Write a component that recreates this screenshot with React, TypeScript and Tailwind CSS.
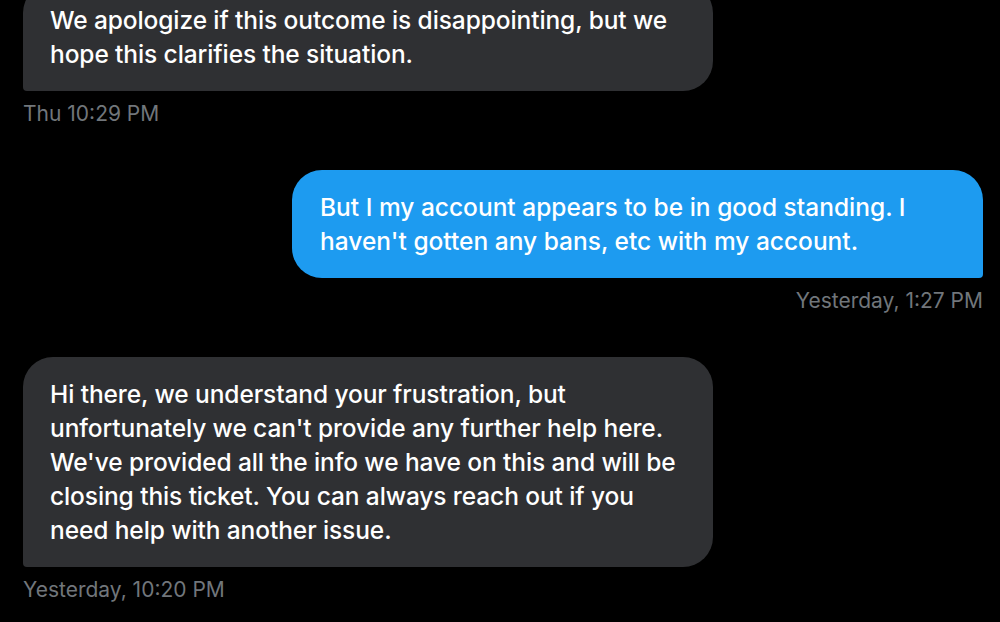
import React from "react";

const font = { fontFamily: "Inter, 'Liberation Sans', sans-serif" };

export default function App() {
  return (
    <div className="w-[1000px] h-[622px] bg-black overflow-hidden text-white" style={font}>
      <div className="flex flex-col pl-[23px] pr-[17px] mt-[-17px]">
        <div className="flex flex-col items-start">
          <div className="w-[690px] bg-[#2f3033] rounded-[30px] rounded-bl-[4px] px-[27px] py-[20px] text-[24.5px] leading-[34px] font-medium tracking-[-0.1px]">
            We apologize if this outcome is disappointing, but we
            <br />
            hope this clarifies the situation.
          </div>
          <div className="mt-[11px] text-[21px] leading-[24px] text-[#71767b]">Thu 10:29 PM</div>
        </div>
        <div className="flex flex-col items-end mt-[44px]">
          <div className="w-[691px] bg-[#1d9bf0] rounded-[30px] rounded-br-[4px] px-[28px] py-[20px] text-[24.5px] leading-[34px] font-medium tracking-[0px]">
            But I my account appears to be in good standing. I
            <br />
            haven't gotten any bans, etc with my account.
          </div>
          <div className="mt-[11px] text-[21px] leading-[24px] text-[#71767b]">Yesterday, 1:27 PM</div>
        </div>
        <div className="flex flex-col items-start mt-[44px]">
          <div className="w-[690px] bg-[#2f3033] rounded-[30px] rounded-bl-[4px] px-[27px] py-[20px] text-[24.5px] leading-[34px] font-medium tracking-[-0.1px]">
            Hi there, we understand your frustration, but
            <br />
            unfortunately we can't provide any further help here.
            <br />
            We've provided all the info we have on this and will be
            <br />
            closing this ticket. You can always reach out if you
            <br />
            need help with another issue.
          </div>
          <div className="mt-[11px] text-[21px] leading-[24px] text-[#71767b]">Yesterday, 10:20 PM</div>
        </div>
      </div>
    </div>
  );
}
